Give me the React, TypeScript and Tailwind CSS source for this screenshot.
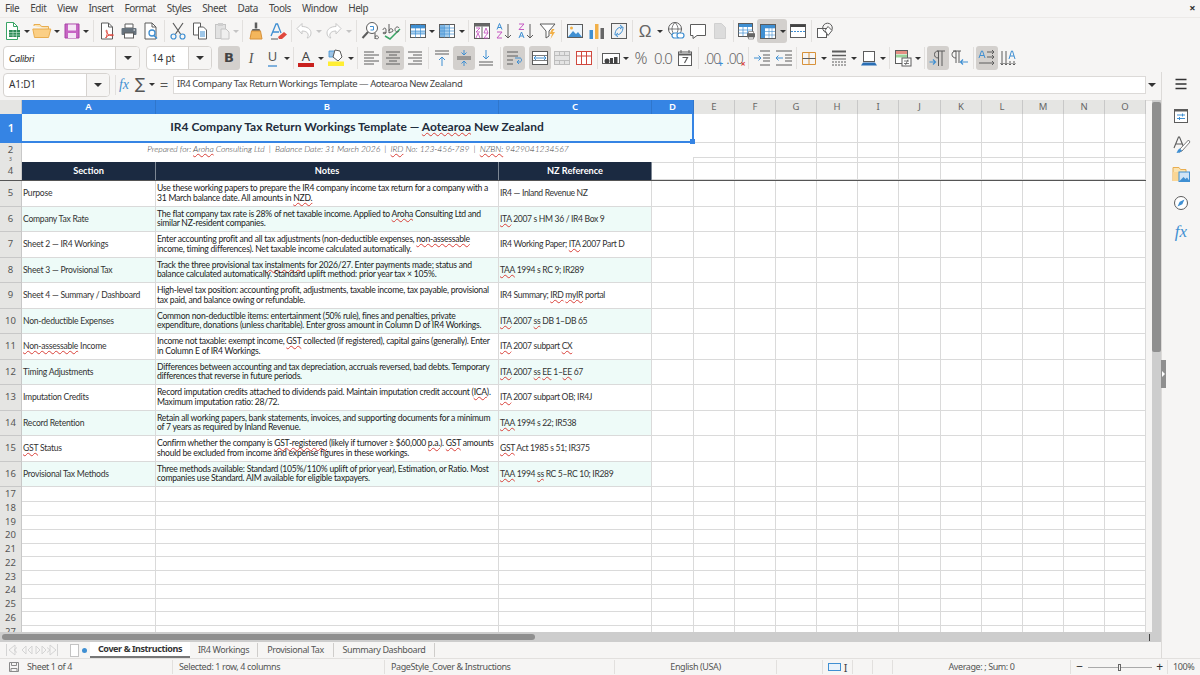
import React from 'react'

// ─── Data ─────────────────────────────────────────────────────────────────────

// ~word~ gets the red spell-check underline
const rows: { a: string; b: [string, string]; c: string }[] = [
  { a: 'Purpose', b: ['Use these working papers to prepare the IR4 company income tax return for a company with a', '31 March balance date. All amounts in ~NZD.~'], c: 'IR4 — Inland Revenue NZ' },
  { a: 'Company Tax Rate', b: ['The flat company tax rate is 28% of net taxable income. Applied to ~Aroha~ Consulting Ltd and', 'similar NZ-resident companies.'], c: '~ITA~ 2007 s HM 36 / IR4 Box 9' },
  { a: 'Sheet 2 — IR4 Workings', b: ['Enter accounting profit and all tax adjustments (non-deductible expenses, ~non-assessable~', 'income, timing differences). Net taxable income calculated automatically.'], c: 'IR4 Working Paper; ~ITA~ 2007 Part D' },
  { a: 'Sheet 3 — Provisional Tax', b: ['Track the three provisional tax ~instalments~ for 2026/27. Enter payments made; status and', 'balance calculated automatically. Standard uplift method: prior year tax × 105%.'], c: '~TAA~ 1994 s RC 9; IR289' },
  { a: 'Sheet 4 — Summary / Dashboard', b: ['High-level tax position: accounting profit, adjustments, taxable income, tax payable, provisional', 'tax paid, and balance owing or refundable.'], c: 'IR4 Summary; ~IRD~ ~myIR~ portal' },
  { a: 'Non-deductible Expenses', b: ['Common non-deductible items: entertainment (50% rule), fines and penalties, private', 'expenditure, donations (unless charitable). Enter gross amount in Column D of IR4 Workings.'], c: '~ITA~ 2007 ~ss~ DB 1–DB 65' },
  { a: '~Non-assessable~ Income', b: ['Income not taxable: exempt income, ~GST~ collected (if registered), capital gains (generally). Enter', 'in Column E of IR4 Workings.'], c: '~ITA~ 2007 subpart ~CX~' },
  { a: 'Timing Adjustments', b: ['Differences between accounting and tax depreciation, accruals reversed, bad debts. Temporary', 'differences that reverse in future periods.'], c: '~ITA~ 2007 ~ss~ ~EE~ 1–~EE~ 67' },
  { a: 'Imputation Credits', b: ['Record imputation credits attached to dividends paid. Maintain imputation credit account (~ICA~).', 'Maximum imputation ratio: 28/72.'], c: '~ITA~ 2007 subpart OB; IR4J' },
  { a: 'Record Retention', b: ['Retain all working papers, bank statements, invoices, and supporting documents for a minimum', 'of 7 years as required by Inland Revenue.'], c: '~TAA~ 1994 s 22; IR538' },
  { a: '~GST~ Status', b: ['Confirm whether the company is ~GST-registered~ (likely if turnover ≥ $60,000 ~p.a.~). ~GST~ amounts', 'should be excluded from income and expense figures in these workings.'], c: '~GST~ Act 1985 s 51; IR375' },
  { a: 'Provisional Tax Methods', b: ['Three methods available: Standard (105%/110% uplift of prior year), Estimation, or Ratio. Most', 'companies use Standard. AIM available for eligible taxpayers.'], c: '~TAA~ 1994 ~ss~ RC 5–RC 10; IR289' },
]

const emptyRows = [17, 18, 19, 20, 21, 22, 23, 24, 25, 26, 27]
const restCols = ['E', 'F', 'G', 'H', 'I', 'J', 'K', 'L', 'M', 'N', 'O']
const gridCols = 'grid grid-cols-[22px_134px_343px_153px_42px_41px_41px_41px_41px_41px_42px_41px_41px_41px_41px_41px]'
const cellFont = "font-['Lato','Liberation_Sans',sans-serif]"
const uiFont = "font-['Noto_Sans','Liberation_Sans',sans-serif]"

// ─── Helpers ──────────────────────────────────────────────────────────────────

function Spell({ text }: { text: string }) {
  const parts = text.split('~')
  return (
    <>
      {parts.map((p, i) =>
        i % 2 === 1 ? (
          <span key={i} className="underline decoration-wavy decoration-[#d9413a] decoration-1 underline-offset-[0.5px]">{p}</span>
        ) : (
          <span key={i}>{p}</span>
        ),
      )}
    </>
  )
}

function Svg({ children }: { children: React.ReactNode }) {
  return <svg width="20" height="20" viewBox="0 0 20 20" fill="none" strokeWidth="1">{children}</svg>
}

function B({ children, active, w }: { children: React.ReactNode; active?: boolean; w?: string }) {
  return (
    <div className={`${w ?? 'w-[22px]'} h-[24px] shrink-0 flex items-center justify-center rounded-[3px] ${active ? 'bg-[#d3d0cd]' : ''}`}>
      {children}
    </div>
  )
}

function Arrow({ muted }: { muted?: boolean }) {
  return (
    <div className="w-[8px] h-[24px] shrink-0 flex items-center justify-center">
      <div className={`w-0 h-0 border-l-[3px] border-r-[3px] border-t-[3px] border-l-transparent border-r-transparent ${muted ? 'border-t-[#c4c4c4]' : 'border-t-[#333]'}`} />
    </div>
  )
}

function Sep({ w }: { w: string }) {
  return (
    <div className={`${w} h-[24px] shrink-0 flex items-center justify-center`}>
      <div className="w-px h-[22px] bg-[#e2e0de]" />
    </div>
  )
}

function Combo({ w, text, italic, btn }: { w: string; text: string; italic?: boolean; btn: string }) {
  return (
    <div className={`${w} h-[24px] shrink-0 flex bg-white border border-[#d6d3d0] rounded-[4px] overflow-hidden`}>
      <div className={`flex-1 pl-[5px] flex items-center text-[10px] tracking-[-0.2px] text-[#333] ${italic ? "italic font-['Lato',sans-serif]" : ''}`}>{text}</div>
      <div className={`${btn} flex items-center justify-center border-l border-[#d6d3d0] bg-[#f6f5f4]`}>
        <div className="w-0 h-0 border-l-[4px] border-r-[4px] border-t-[4px] border-l-transparent border-r-transparent border-t-[#333]" />
      </div>
    </div>
  )
}

// ─── Icons ────────────────────────────────────────────────────────────────────

const G = '#5c5c5c'
const BL = '#3f8fd2'

const lines = (ys: number[], x1: number, x2: number, c = G) =>
  ys.map(y => <path key={y} d={`M${x1} ${y}H${x2}`} stroke={c} />)

const icons = {
  newDoc: <Svg><path d="M4.5 1.5h7l4 4v13h-11z" fill="#fff" stroke="#3aa566" /><path d="M11.5 1.5v4h4" stroke="#3aa566" /><rect x="7" y="9" width="11" height="7" fill="#2e8b57" /><path d="M7 11.5h11M7 14h11M11 9v7M14.5 9v7" stroke="#c9ecd6" strokeWidth=".6" /></Svg>,
  open: <Svg><path d="M2 5V3.5h6l1.5 2h7V8" fill="#fbe3b0" stroke="#e9ad4f" /><path d="M.8 8h18l-2.3 8.5H2.5z" fill="#fbcf85" stroke="#e9ad4f" /></Svg>,
  save: <Svg><path d="M3 3h14v14H3z" fill="#c765c4" stroke="#a845a5" /><rect x="6" y="3.5" width="8" height="6" fill="#f5e6f5" /><rect x="6" y="12" width="8" height="5" fill="#f5e6f5" /></Svg>,
  pdf: <Svg><path d="M4.5 2h7l4 4v12h-11z" fill="#fff" stroke={G} /><path d="M11.5 2v4h4" stroke={G} /><path d="M9 17c2-5 1-8 .5-8s-1 3 3 5c2 1 4 1 4 0s-5-1-8 3" stroke="#e0483e" /></Svg>,
  print: <Svg><path d="M6 3h8v4H6z" fill="#fff" stroke={G} /><rect x="2.5" y="7" width="15" height="7" rx="1" fill="#66727c" /><rect x="5.5" y="12" width="9" height="5" fill="#fff" stroke={G} /><path d="M14.5 9h1.5" stroke="#fff" /></Svg>,
  preview: <Svg><path d="M4 2h7l4 4v12H4z" fill="#fff" stroke={G} /><path d="M11 2v4h4" stroke={G} /><circle cx="11" cy="12" r="3" stroke={BL} strokeWidth="1.3" /><path d="M13 14.5l3 3" stroke={BL} strokeWidth="1.5" /></Svg>,
  cut: <Svg><path d="M5 2l7.5 11M15 2L7.500 13" stroke={G} strokeWidth="1.2" /><circle cx="5.500" cy="15.500" r="2.500" stroke={BL} strokeWidth="1.2" /><circle cx="14.500" cy="15.500" r="2.500" stroke={BL} strokeWidth="1.2" /></Svg>,
  copy: <Svg><path d="M3.500 2h7v12h-7z" fill="#fff" stroke={G} /><path d="M8.500 6h5l3 3v9h-8z" fill="#fff" stroke={G} />{lines([11, 13, 15], 10, 15, BL)}</Svg>,
  paste: <Svg><rect x="3.500" y="3.500" width="10" height="14" fill="#e2e2e2" stroke="#c4c4c4" /><rect x="6" y="2" width="5" height="3" fill="#cfcfcf" /><path d="M9 8h5l3 3v7H9z" fill="#efefef" stroke="#c4c4c4" /></Svg>,
  clone: <Svg><path d="M10 1.500v6" stroke={G} strokeWidth="2.500" /><path d="M6.500 8h7l1 2h-9z" fill="#666" /><path d="M5.500 10h9l1.500 8H4z" fill="#f4b65c" stroke="#d8923a" /></Svg>,
  clear: <Svg><path d="M3 15L8 3h1.500L13 12M5 11h6" stroke={BL} strokeWidth="1.300" /><path d="M10 16l6-5 3 2.500-5 4.500h-3z" fill="#e0483e" /><path d="M3 18h7" stroke={G} /></Svg>,
  undo: <Svg><path d="M3 7.500l5-5v3c5 0 9 2.500 9 6.500 0 3-2 5-4 5 1-1 1.500-2.500 1-4-.5-2-3-3-6-3v3z" fill="#fff" stroke="#c8c8c8" /></Svg>,
  redo: <Svg><path d="M17 7.500l-5-5v3c-5 0-9 2.500-9 6.500 0 3 2 5 4 5-1-1-1.500-2.500-1-4 .5-2 3-3 6-3v3z" fill="#fff" stroke="#c8c8c8" /></Svg>,
  find: <Svg><circle cx="12" cy="7" r="5.500" fill="#fff" stroke={G} /><path d="M8 11l-5.500 6" stroke={G} strokeWidth="2" /><path d="M10 5.500h3.500v3.500h-3M13.500 9" stroke={BL} /><path d="M15 12v6M15 15.500c2-1.500 3.500 0 3.500 1s-1.500 2-3.500.5" stroke={G} /></Svg>,
  spell: <Svg><path d="M3 16l5 3 10-10" stroke="#3aa566" strokeWidth="1.500" transform="translate(0 -1)" /><path d="M1 9c0-2 3-3 3 0v3c-1-1-3-1-3 0 0 1 2 1 3 0M7 3v9c1-1 4-1 4-2 0-3-4-3-4 0M17 7c-1-2-4-1-4 1.500S16 12 17 10" stroke={G} /></Svg>,
  rows: <Svg><rect x="2.500" y="3.500" width="15" height="13" fill="#fff" stroke={G} /><rect x="3" y="4" width="14" height="3" fill={BL} /><rect x="3" y="10" width="14" height="3" fill="#a9d0ee" /><path d="M2.500 7h15M2.500 10h15M2.500 13h15M7.500 3.500v13M12.500 3.500v13" stroke={BL} strokeWidth=".7" /></Svg>,
  cols: <Svg><rect x="2.500" y="3.500" width="15" height="13" fill="#fff" stroke={G} /><rect x="7.500" y="4" width="5" height="12" fill="#a9d0ee" /><rect x="3" y="4" width="4" height="12" fill="#7fb6e3" /><path d="M2.500 7h15M2.500 10h15M2.500 13h15M7.500 3.500v13M12.500 3.500v13" stroke={BL} strokeWidth=".7" /></Svg>,
  sort: <Svg><rect x="2.500" y="2.500" width="15" height="15" fill="#fff" stroke={G} /><rect x="2.500" y="2.500" width="15" height="3" fill="#666" /><path d="M4 7h4L4 11h4M4 17l2-5 2 5M12 12l2-5 2 5M12 12h4l-4 5h4" stroke="#c559c2" strokeWidth=".9" /><path d="M10 5.500v12" stroke={G} /></Svg>,
  asc: <Svg><path d="M3 8.500l2.500-6 2.500 6M4 6.500h3" stroke={BL} /><path d="M3 11h5l-5 6h5" stroke="#c559c2" /><path d="M14 3v14M11 14l3 3 3-3" stroke={G} /></Svg>,
  desc: <Svg><path d="M3 3h5L3 8.500h5" stroke="#c559c2" /><path d="M3 17l2.500-6 2.500 6M4 15h3" stroke={BL} /><path d="M14 3v14M11 14l3 3 3-3" stroke={G} /></Svg>,
  filter: <Svg><path d="M2 3h15l-6 7v5l-3 2v-7z" fill="#fff" stroke={G} /><path d="M14 8l-2.500 5h2.500l-1.500 5 4.500-7h-2.500l2-3z" fill="#f2b048" /></Svg>,
  image: <Svg><rect x="2.500" y="3.500" width="15" height="13" fill="#eef6fc" stroke={G} /><circle cx="6.500" cy="7" r="1.500" fill="#f2b048" /><path d="M3 16l5-6 3 3 2-2 4 5z" fill={BL} /></Svg>,
  chart: <Svg><rect x="2.500" y="9" width="3.500" height="9" fill={BL} /><rect x="8" y="3" width="3.500" height="15" fill="#f2b048" /><rect x="13.500" y="7" width="3.500" height="11" fill="#666" /></Svg>,
  pivot: <Svg><rect x="2.500" y="2.500" width="15" height="15" fill="#f1f1f1" stroke={G} /><path d="M6 14c0-5 3-8 7-8M11 4l2.500 2L11 8M14 6c0 5-3 8-7 8M9 12l-2.500 2L9 16" stroke={BL} /></Svg>,
  link: <Svg><circle cx="9" cy="8" r="6.500" fill="#fff" stroke={G} /><path d="M2.500 8h13M9 1.500c-4 4-4 9 0 13M9 1.500c4 4 4 9 0 13" stroke={G} strokeWidth=".8" /><rect x="6" y="12" width="7" height="5" rx="2.500" fill="#fff" stroke={BL} strokeWidth="1.200" /><rect x="11" y="12" width="7" height="5" rx="2.500" fill="#fff" stroke={BL} strokeWidth="1.200" /></Svg>,
  comment: <Svg><path d="M2.500 3.500h15v11H9l-4 3v-3H2.500z" fill="#fff" stroke={G} /></Svg>,
  header: <Svg><path d="M4.500 2.500h7l4 4v11h-11z" fill="#dcdcdc" stroke="#d0d0d0" /></Svg>,
  defined: <Svg><rect x="2.500" y="2.500" width="14" height="13" fill="#fff" stroke={G} /><rect x="3" y="3" width="13" height="3" fill={BL} /><path d="M2.500 9h14M2.500 12h14M7 3v12M11.500 3v12" stroke={BL} strokeWidth=".7" /><rect x="11" y="12" width="8" height="4.500" rx="1" fill="#666" /><path d="M12.500 10.500h5v2h-5zM12.500 16h5v2h-5z" fill="#fff" stroke={G} strokeWidth=".6" /></Svg>,
  freeze: <Svg><rect x="2.500" y="3.500" width="15" height="14" fill="#fff" stroke={G} /><rect x="3" y="4" width="14" height="3" fill={BL} /><rect x="3" y="4" width="4" height="13" fill={BL} /><path d="M7 7h10M7 10.500h10M7 14h10M11 7v10M14 7v10" stroke={BL} strokeWidth=".6" /></Svg>,
  split: <Svg><rect x="2.500" y="3.500" width="15" height="13" fill="#fff" stroke={G} /><rect x="2.500" y="3.500" width="15" height="2.500" fill="#444" /><path d="M3 10.500h14" stroke={BL} strokeDasharray="2 1" /></Svg>,
  shapes: <Svg><rect x="2.500" y="7.500" width="9" height="9" fill="#fff" stroke={G} /><circle cx="12.500" cy="7" r="4.800" stroke={G} /><path d="M13 5.500l4 4-4 5-3-5z" fill="#fff" stroke={G} /></Svg>,
  alignLeft: <Svg>{lines([4, 10, 16], 3, 13)}<path d="M3 7h15M3 13h15" stroke={G} /></Svg>,
  alignCenter: <Svg>{lines([4, 10, 16], 3, 17)}{lines([7, 13], 6, 14)}</Svg>,
  alignRight: <Svg>{lines([4, 10, 16], 3, 17)}{lines([7, 13], 8, 17)}</Svg>,
  top: <Svg>{lines([3, 6], 3, 17)}<path d="M10 18V9M7 12l3-3 3 3" stroke={BL} /></Svg>,
  vcenter: <Svg>{lines([9, 11], 3, 17)}<path d="M10 2v5M7.500 4.500L10 7l2.500-2.500M10 18v-5M7.500 15.500L10 13l2.500 2.500" stroke={BL} /></Svg>,
  bottom: <Svg>{lines([14, 17], 3, 17)}<path d="M10 2v9M7 8l3 3 3-3" stroke={BL} /></Svg>,
  wrap: <Svg>{lines([4, 8], 3, 14)}{lines([12, 16], 3, 9)}<path d="M11 10h5c2 0 2 4 0 4h-2M15 12l-2 2 2 2" stroke={BL} /></Svg>,
  merge: <Svg><rect x="2.500" y="3.500" width="15" height="13" fill="#fff" stroke={G} /><path d="M2.500 7.500h15M2.500 12.500h15" stroke={G} strokeWidth=".8" /><path d="M3 10h14" stroke="#fff" strokeWidth="3" /><path d="M4 10h12M6 8l-2 2 2 2M14 8l2 2-2 2" stroke={BL} /></Svg>,
  mergeCells: <Svg><rect x="2.500" y="3.500" width="15" height="13" fill="#e4e4e4" stroke="#bdbdbd" /><path d="M2.500 7.500h15M2.500 12.500h15M7.500 3.500v4M12.500 3.500v4M7.500 12.500v4M12.500 12.500v4" stroke="#bdbdbd" /></Svg>,
  unmerge: <Svg><rect x="2.500" y="3.500" width="15" height="13" fill="#fff" stroke="#d0483e" /><path d="M2.500 8h15M7.500 3.500v13M12.500 3.500v13" stroke="#d0483e" /></Svg>,
  currency: <Svg><rect x="1.500" y="5.500" width="17" height="10" fill="#fff" stroke={G} /><circle cx="6" cy="13" r="2.500" fill="#444" /><rect x="9" y="10" width="3" height="6" fill="#444" /><rect x="13" y="9" width="3.500" height="7" fill="#444" /></Svg>,
  date: <Svg><rect x="3.500" y="4" width="13" height="13.500" fill="#fff" stroke={G} /><path d="M3.500 6.500h13" stroke={G} strokeWidth="2" /><path d="M6 2v3M14 2v3" stroke={G} /><path d="M7.500 9.500h5L9.500 15" stroke={G} strokeWidth="1.200" /></Svg>,
  indent: <Svg>{lines([3, 17], 8, 18)}{lines([7, 10, 13], 11, 18)}<path d="M2 10h7M6.500 7.500L9 10l-2.500 2.500" stroke={BL} /></Svg>,
  outdent: <Svg>{lines([3, 17], 2, 18)}{lines([7, 10, 13], 11, 18)}<path d="M9 10H2M4.500 7.500L2 10l2.500 2.500" stroke={BL} /></Svg>,
  borders: <Svg><path d="M3.500 4.500h13v12h-13zM10 4.500v12" stroke="#d8923a" /><path d="M3.500 10.500h13" stroke={G} /></Svg>,
  borderStyle: <Svg><path d="M3 3.500h14" stroke={G} strokeWidth="2" /><path d="M3 7.500h14" stroke={G} strokeWidth="1.500" /><path d="M3 11h14" stroke={G} /><path d="M3 14h14M3 17h14" stroke={G} strokeDasharray="2 1" /></Svg>,
  borderColor: <Svg><rect x="4.500" y="3.500" width="11" height="10" fill="#fff" stroke={G} /><path d="M2 17.500l2-3h12l2 3z" fill="#2a6fb5" /></Svg>,
  cond: <Svg><rect x="2.500" y="2.500" width="12" height="13" fill="#fff" stroke={G} /><rect x="3" y="3" width="11" height="3" fill="#e58f83" /><rect x="3" y="6.500" width="11" height="3" fill="#9bd39b" /><rect x="9" y="10" width="9" height="8" fill="#fff" stroke={G} /><path d="M11 13h5M11 15.500h5M15 11.500l-2.500 5.500" stroke={G} strokeWidth=".8" /></Svg>,
  ltr: <Svg><path d="M9 3h8M10.500 3v15M14 3v15M10.500 3c-3 0-4 1.500-4 3.500s1 3.500 4 3.500" stroke={G} /><path d="M1.500 14h6M5 11.500L7.500 14 5 16.500" stroke={BL} strokeWidth="1.200" /></Svg>,
  rtl: <Svg><path d="M3 3h8M6 3v12M9 3v12M6 3C3.500 3 2 4.500 2 6.500S3.500 10 6 10" stroke={G} /><path d="M11 14h7M13 11.500L10.500 14l2.500 2.500" stroke={BL} strokeWidth="1.200" /></Svg>,
  hLtr: <Svg><path d="M2 10l2.500-7h1l2.500 7M3 7.500h4" stroke={BL} /><path d="M10 4h7M15 2l2 2-2 2M10 9h7M15 7l2 2-2 2M2 15h15M15 13l2 2-2 2" stroke={G} /></Svg>,
  vTtb: <Svg><path d="M10 11l2.500-8h1l2.500 8M11 8h4" stroke={BL} /><path d="M3 3v14M1.500 15L3 17l1.500-2M7 3v14M5.500 15L7 17l1.500-2M11 13v4M9.500 15.500L11 17l1.500-1.500M15 13v4M13.500 15.500L15 17l1.500-1.500" stroke={G} /></Svg>,
  burger: <Svg><path d="M4.500 5.500h11M4.500 10h11M4.500 14.500h11" stroke="#333" strokeWidth="1.400" /></Svg>,
  props: <Svg><rect x="3.500" y="3.500" width="13" height="13" fill="#fff" stroke={G} /><path d="M3.500 4.500h13" stroke={G} strokeWidth="2" /><path d="M6 9h8M6 12.500h8" stroke={BL} /><path d="M11.500 7.500v3M8.500 11v3" stroke={BL} /></Svg>,
  styles: <Svg><path d="M3 13L7.500 2h1L13 13M5 9h6" stroke={G} strokeWidth="1.100" /><path d="M17.500 5L9 14l-1 3 3-1 8-9z" fill="#fff" stroke={G} strokeWidth=".8" /><path d="M7 15l-1.500 3 3.500-.5 2-2-2.500-2z" fill={BL} /></Svg>,
  gallery: <Svg><path d="M2 17V3.500h6l1.500 2H15V8" fill="#fbe3b0" stroke="#e9ad4f" /><path d="M2 17V8h7v9z" fill="#fbd694" /><rect x="8" y="8" width="10.500" height="9.500" fill="#cfe4f6" stroke={BL} /><path d="M8.500 17l4-4 2 2 1.500-1.500 2.500 3.500z" fill={BL} /></Svg>,
  nav: <Svg><circle cx="10" cy="10" r="6.500" fill="#fff" stroke={G} /><path d="M13.500 6.500l-2.200 4.800-4.800 2.200 2.200-4.800z" fill={BL} /></Svg>,
  tabNav: (
    <svg width="54" height="14" viewBox="0 0 54 14" fill="none" stroke="#d4d4d4" strokeWidth="1">
      <path d="M1.500 1v12M10 2L4 7l6 5zM12 4.500L9 7l3 2.500" />
      <path d="M21 3l-4 4 4 4zM27 3l-4 4 4 4zM31 3l4 4-4 4zM37 3l4 4-4 4z" />
      <path d="M45 2l6 5-6 5zM42 4.500L45 7l-3 2.500M52.500 1v12" />
    </svg>
  ),
}

// ─── Toolbars ─────────────────────────────────────────────────────────────────

function ToolbarOne() {
  return (
    <div className="h-[27px] flex items-center pl-px border-t border-[#eceae8]">
      <B>{icons.newDoc}</B><Arrow />
      <B>{icons.open}</B><Arrow />
      <B w="w-[21px]">{icons.save}</B><Arrow />
      <Sep w="w-[6px]" />
      <B>{icons.pdf}</B><B>{icons.print}</B><B>{icons.preview}</B>
      <Sep w="w-[5px]" />
      <B>{icons.cut}</B><B>{icons.copy}</B><B w="w-[21px]">{icons.paste}</B><Arrow muted />
      <Sep w="w-[5px]" />
      <B>{icons.clone}</B><B>{icons.clear}</B>
      <Sep w="w-[4px]" />
      <B>{icons.undo}</B><Arrow muted />
      <B>{icons.redo}</B><Arrow muted />
      <Sep w="w-[6px]" />
      <B>{icons.find}</B><B>{icons.spell}</B>
      <Sep w="w-[4px]" />
      <B w="w-[21px]">{icons.rows}</B><Arrow />
      <B>{icons.cols}</B><Arrow />
      <Sep w="w-[5px]" />
      <B>{icons.sort}</B><B>{icons.asc}</B><B>{icons.desc}</B><B>{icons.filter}</B>
      <Sep w="w-[5px]" />
      <B>{icons.image}</B><B>{icons.chart}</B><B>{icons.pivot}</B>
      <Sep w="w-[4px]" />
      <B><span className="text-[17px] leading-none text-[#666] font-['Liberation_Sans',sans-serif]">Ω</span></B><Arrow />
      <B w="w-[23px]">{icons.link}</B><B>{icons.comment}</B><B>{icons.header}</B>
      <Sep w="w-[4px]" />
      <B>{icons.defined}</B>
      <div className="w-[30px] h-[24px] shrink-0 flex items-center bg-[#d3d0cd] rounded-[3px]">
        <B>{icons.freeze}</B><Arrow />
      </div>
      <B>{icons.split}</B>
      <Sep w="w-[5px]" />
      <B>{icons.shapes}</B>
    </div>
  )
}

function ToolbarTwo() {
  return (
    <div className="h-[28px] flex items-center pl-[3px]">
      <Combo w="w-[137px]" text="Calibri" italic btn="w-[24px]" />
      <div className="w-[6px] shrink-0" />
      <Combo w="w-[66px]" text="14 pt" btn="w-[23px]" />
      <div className="w-[6px] shrink-0" />
      <B active><span className="text-[13px] font-semibold font-['DejaVu_Sans',sans-serif] text-[#444]">B</span></B>
      <B><span className="text-[14px] italic font-['Liberation_Serif',serif] text-[#555]">I</span></B>
      <B w="w-[21px]">
        <span className="relative text-[13px] text-[#555] leading-none pb-[2px] border-b-2 border-[#7fb0dc]">U</span>
      </B>
      <Arrow />
      <Sep w="w-[4px]" />
      <B>
        <span className="flex flex-col items-center leading-none">
          <span className="text-[13px] text-[#444] leading-[13px]">A</span>
          <span className="w-[16px] h-[4px] bg-[#c9211e]" />
        </span>
      </B>
      <Arrow />
      <B>
        <svg width="20" height="20" viewBox="0 0 20 20" fill="none">
          <path d="M3 3h6v6H3z" fill="#9cc3e6" stroke="#3f8fd2" strokeWidth=".8" />
          <path d="M9 2l5 1 2 6-4 4-5-4z" fill="#fff" stroke="#5c5c5c" />
          <rect x="2" y="13.500" width="16" height="4.500" fill="#ffee33" />
        </svg>
      </B>
      <Arrow />
      <Sep w="w-[5px]" />
      <B>{icons.alignLeft}</B><B active>{icons.alignCenter}</B><B>{icons.alignRight}</B>
      <Sep w="w-[5px]" />
      <B>{icons.top}</B><B active>{icons.vcenter}</B><B>{icons.bottom}</B>
      <Sep w="w-[6px]" />
      <B active>{icons.wrap}</B>
      <div className="w-[4px] shrink-0" />
      <B active>{icons.merge}</B><B>{icons.mergeCells}</B><B>{icons.unmerge}</B>
      <Sep w="w-[5px]" />
      <B>{icons.currency}</B><Arrow />
      <B><span className="text-[16px] font-light text-[#666]">%</span></B>
      <B><span className="text-[15px] font-light text-[#666] tracking-[-1px]">0.0</span></B>
      <B>{icons.date}</B>
      <Sep w="w-[5px]" />
      <B><span className="relative text-[14px] font-light text-[#666] tracking-[-1px]">.00<span className="absolute -right-[2px] top-[9px] text-[9px] font-bold text-[#3f8fd2]">+</span></span></B>
      <B w="w-[23px]"><span className="relative text-[14px] font-light text-[#666] tracking-[-1px]">.00<span className="absolute -right-[2px] top-[9px] text-[9px] font-bold text-[#d9413a]">×</span></span></B>
      <Sep w="w-[5px]" />
      <B>{icons.indent}</B><B>{icons.outdent}</B>
      <Sep w="w-[3px]" />
      <B>{icons.borders}</B><Arrow />
      <B>{icons.borderStyle}</B>
      <Arrow />
      <B w="w-[21px]">{icons.borderColor}</B><Arrow />
      <Sep w="w-[5px]" />
      <B>{icons.cond}</B><Arrow />
      <Sep w="w-[5px]" />
      <B active>{icons.ltr}</B><B>{icons.rtl}</B>
      <Sep w="w-[5px]" />
      <B active>{icons.hLtr}</B><B>{icons.vTtb}</B>
    </div>
  )
}

function FormulaBar() {
  return (
    <div className="h-[28px] flex items-center pl-[3px] pb-[3px] shrink-0">
      <Combo w="w-[107px]" text="A1:D1" btn="w-[23px]" />
      <div className="w-[6px] h-[20px] border-r border-[#e2e0de] shrink-0" />
      <div className="w-[14px] shrink-0 ml-[1px] text-center italic text-[14px] text-[#3f8fd2] font-['Liberation_Serif',serif]">fx</div>
      <div className="w-[16px] shrink-0 ml-[1px] text-center text-[15px] text-[#555] font-['DejaVu_Sans',sans-serif]">∑</div>
      <Arrow />
      <div className="w-[16px] shrink-0 text-center text-[15px] text-[#555]">=</div>
      <div className="w-[973px] ml-px h-[18px] bg-white border border-[#dcdad8] flex items-center pl-[3px] text-[9.5px] tracking-[-0.45px] text-[#444] whitespace-nowrap">
        IR4 Company Tax Return Workings Template — Aotearoa New Zealand
      </div>
      <div className="w-[12px] flex justify-center">
        <div className="w-0 h-0 border-l-[4px] border-r-[4px] border-t-[4px] border-l-transparent border-r-transparent border-t-[#333]" />
      </div>
    </div>
  )
}

// ─── Sheet ────────────────────────────────────────────────────────────────────

const line = 'border-r border-b border-[#dadada]'
const rowHeadBase = 'bg-[#e5e5e3] border-r border-b border-[#c8c8c8] flex items-center justify-center text-[#555]'
const rowHeadCls = `${rowHeadBase} text-[9.5px]`

function RestCells() {
  return (
    <>
      {restCols.map(c => <div key={c} className={line} />)}
    </>
  )
}

function Sheet() {
  return (
    <div className="w-[1146px] h-[532px] overflow-hidden bg-white">
      {/* column headers */}
      <div className={`${gridCols} h-[14px] text-[9.5px] leading-[14px] text-center`}>
        <div className="bg-[#e5e5e3] border-r border-[#c8c8c8]" />
        {['A', 'B', 'C', 'D'].map(c => (
          <div key={c} className="bg-[#3584e4] text-white font-semibold border-r border-[#2f76cc]">{c}</div>
        ))}
        {restCols.map(c => (
          <div key={c} className="bg-[#e5e5e3] text-[#666] border-r border-[#c8c8c8]">{c}</div>
        ))}
      </div>

      {/* row 1: merged title */}
      <div className={`${gridCols} h-[29px]`}>
        <div className="bg-[#3584e4] text-white font-semibold text-[11px] flex items-center justify-center">1</div>
        <div className={`relative col-span-4 bg-[#effbfb] border-b-2 border-r-2 border-[#3584e4] flex items-center justify-center pb-px text-[12px] font-bold text-[#1f2d3d] ${cellFont}`}>
          <span><Spell text="IR4 Company Tax Return Workings Template — ~Aotearoa~ New Zealand" /></span>
          <div className="absolute -right-[3px] -bottom-[3px] w-[5px] h-[5px] bg-[#3584e4]" />
        </div>
        <RestCells />
      </div>

      {/* row 2: subtitle */}
      <div className={`${gridCols} h-[14px]`}>
        <div className={rowHeadCls}>2</div>
        <div className="col-span-4 flex items-center justify-center pb-[2px] italic text-[8.6px] tracking-[-0.08px] font-light text-[#444] whitespace-pre font-['Lato','Liberation_Sans',sans-serif]">
          <span><Spell text="Prepared for: ~Aroha~ Consulting Ltd  |  Balance Date: 31 March 2026  |  ~IRD~ No: 123-456-789  |  ~NZBN:~ 9429041234567" /></span>
        </div>
        <RestCells />
      </div>

      {/* row 3: spacer */}
      <div className={`${gridCols} h-[5px]`}>
        <div className={`${rowHeadBase} text-[5px] leading-none`}>3</div>
        <div className="col-span-3" />
        <div className={line} />
        <RestCells />
      </div>

      {/* row 4: table head, carries the freeze line */}
      <div className={`${gridCols} h-[19px] border-b-[1.5px] border-[#555]`}>
        <div className="bg-[#e5e5e3] border-r border-[#c8c8c8] flex items-center justify-center text-[9.5px] text-[#555]">4</div>
        {['Section', 'Notes', 'NZ Reference'].map(h => (
          <div key={h} className={`bg-[#1b2a41] border-r border-[#7d8794] flex items-center justify-center pb-px text-[9.2px] font-bold text-white ${cellFont}`}>{h}</div>
        ))}
        <div className={line} />
        <RestCells />
      </div>

      {/* rows 5-16 */}
      {rows.map((r, i) => {
        const bg = i % 2 === 1 ? 'bg-[#eefbf8]' : 'bg-white'
        return (
          <div key={i} className={`${gridCols} h-[25.5px]`}>
            <div className={rowHeadCls}>{i + 5}</div>
            <div className={`${bg} ${line} flex items-center pl-px pt-px text-[8.6px] tracking-[-0.25px] text-[#333] whitespace-nowrap ${cellFont}`}>
              <span><Spell text={r.a} /></span>
            </div>
            <div className={`${bg} ${line} flex flex-col justify-center pl-px pt-px text-[8.6px] leading-[9.5px] text-[#222] whitespace-nowrap tracking-[-0.25px] ${cellFont}`}>
              <div><Spell text={r.b[0]} /></div>
              <div><Spell text={r.b[1]} /></div>
            </div>
            <div className={`${bg} ${line} flex items-center pl-px pt-px text-[8.6px] tracking-[-0.35px] text-[#333] whitespace-nowrap ${cellFont}`}>
              <span><Spell text={r.c} /></span>
            </div>
            <div className={line} />
            <RestCells />
          </div>
        )
      })}

      {/* empty rows */}
      {emptyRows.map(n => (
        <div key={n} className={`${gridCols} h-[13.75px]`}>
          <div className={rowHeadCls}>{n}</div>
          <div className={line} />
          <div className={line} />
          <div className={line} />
          <div className={line} />
          <RestCells />
        </div>
      ))}
    </div>
  )
}

function Tabs() {
  return (
    <div className="h-[16px] flex items-center text-[9px] tracking-[-0.4px] text-[#555] shrink-0 whitespace-nowrap">
      <div className="w-[66px] pl-[5px] flex items-center shrink-0">{icons.tabNav}</div>
      <div className="w-[24px] flex items-center justify-center gap-[3px] shrink-0">
        <div className="w-[9px] h-[13px] bg-white border border-[#c4c4c4]" />
        <div className="w-[5px] h-[5px] rounded-full bg-[#3f8fd2]" />
      </div>
      <div className="w-[100px] h-[16px] bg-white border-b-2 border-[#777] flex items-center justify-center font-bold text-[#333] shrink-0">Cover &amp; Instructions</div>
      <div className="w-[68px] text-center border-r border-[#cfcdcb] shrink-0">IR4 Workings</div>
      <div className="w-[76px] text-center border-r border-[#cfcdcb] shrink-0">Provisional Tax</div>
      <div className="w-[101px] text-center border-r border-[#cfcdcb] shrink-0">Summary Dashboard</div>
    </div>
  )
}

function StatusBar() {
  return (
    <div className="h-[17px] flex items-center border-t border-[#e2e0de] text-[9px] tracking-[-0.4px] text-[#555] whitespace-nowrap">
      <div className="w-[173px] flex items-center border-r border-[#e2e0de]">
        <div className="w-[27px] flex justify-center">
          <svg width="12" height="12" viewBox="0 0 12 12" fill="none">
            <path d="M1.500 1.500h9v9h-9z" stroke="#8a8a8a" />
            <path d="M3.500 1.500v3h5v-3M3 10.500v-3h6v3" stroke="#8a8a8a" />
          </svg>
        </div>
        Sheet 1 of 4
      </div>
      <div className="w-[212px] pl-[6px] border-r border-[#e2e0de]">Selected: 1 row, 4 columns</div>
      <div className="w-[230px] pl-[6px] border-r border-[#e2e0de]">PageStyle_Cover &amp; Instructions</div>
      <div className="w-[162px] text-center border-r border-[#e2e0de]">English (USA)</div>
      <div className="w-[46px] border-r border-[#e2e0de] h-[14px]" />
      <div className="w-[30px] h-[14px] flex items-center justify-center gap-[3px] border-r border-[#e2e0de]">
        <div className="w-[13px] h-[8px] border border-[#3f8fd2] bg-[#e8f2fb]" />
        <span className="text-[#444] text-[11px] leading-none">I</span>
      </div>
      <div className="w-[20px] h-[14px] border-r border-[#e2e0de]" />
      <div className="w-[20px] h-[14px] border-r border-[#e2e0de]" />
      <div className="w-[178px] h-[14px] flex items-center justify-center border-r border-[#e2e0de]">Average: ; Sum: 0</div>
      <div className="w-[97px] h-[14px] flex items-center border-r border-[#e2e0de]">
        <span className="w-[17px] text-center text-[12px] leading-none text-[#333]">−</span>
        <div className="relative w-[65px] h-px bg-[#aaa]">
          <div className="absolute left-[30px] -top-[3px] w-[3px] h-[7px] bg-[#f6f5f4] border border-[#666]" />
        </div>
        <span className="w-[15px] text-center text-[12px] leading-none text-[#333]">+</span>
      </div>
      <div className="pl-[5px]">100%</div>
    </div>
  )
}

// ─── Component ────────────────────────────────────────────────────────────────

export default function App() {
  return (
    <div className={`w-[1200px] h-[675px] overflow-hidden flex flex-col bg-[#f6f5f4] ${uiFont}`}>
      {/* Menu */}
      <div className="h-[17px] flex items-center pl-[5px] gap-[11px] text-[10px] tracking-[-0.45px] text-[#444] relative">
        {['File', 'Edit', 'View', 'Insert', 'Format', 'Styles', 'Sheet', 'Data', 'Tools', 'Window', 'Help'].map(m => (
          <span key={m}>{m}</span>
        ))}
        <span className="absolute right-[5px] top-0 text-[11px] font-bold text-[#333]">×</span>
      </div>
      <ToolbarOne />
      <ToolbarTwo />

      <div className="flex-1 flex min-h-0">
        <div className="w-[1161px] flex flex-col shrink-0">
          <FormulaBar />
          <div className="flex h-[532px]">
            <Sheet />
            <div className="w-[6px] border-t border-[#e2e0de]" />
            <div className="w-[9px] bg-[#cdcdcd] pt-[2px]">
              <div className="w-[9px] h-[250px] bg-[#8f8f8f] rounded-[2px]" />
            </div>
          </div>
          <div className="h-[10px] bg-[#cdcdcd] shrink-0 pl-[2px] pr-[11px] flex items-center justify-between">
            <div className="w-[533px] h-[6px] bg-[#8f8f8f] rounded-[3px]" />
            <div className="w-px h-[7px] bg-[#444]" />
          </div>
          <Tabs />
        </div>

        {/* Sidebar */}
        <div className="w-[39px] border-l border-[#dcdad8] flex flex-col items-center relative">
          <div className="h-[24px] flex items-center">{icons.burger}</div>
          <div className="mt-[5px] h-[29px] flex items-center">{icons.props}</div>
          <div className="h-[29px] flex items-center">{icons.styles}</div>
          <div className="h-[29px] flex items-center">{icons.gallery}</div>
          <div className="h-[29px] flex items-center">{icons.nav}</div>
          <div className="h-[29px] flex items-center italic text-[17px] text-[#3f8fd2] font-['Liberation_Serif',serif]">fx</div>
          <div className="absolute -left-px top-[288px] w-[5px] h-[28px] bg-[#8f8f8f] flex items-center justify-center">
            <div className="w-0 h-0 border-t-[3px] border-b-[3px] border-l-[3px] border-t-transparent border-b-transparent border-l-white" />
          </div>
        </div>
      </div>

      <StatusBar />
    </div>
  )
}
